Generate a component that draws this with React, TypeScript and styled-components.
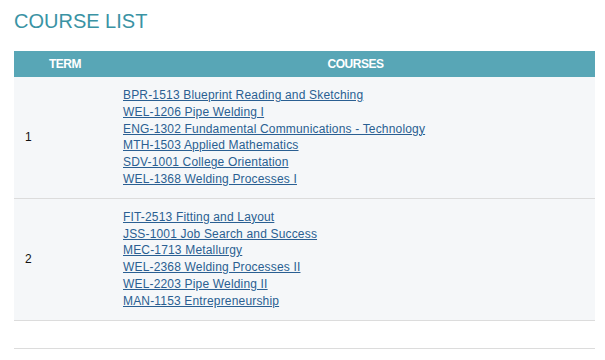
import * as React from 'react';
import styled, { createGlobalStyle } from 'styled-components';

const GlobalStyle = createGlobalStyle`
    body {
        margin: 0;
        background: #ffffff;
        font-family: "Liberation Sans", Arial, sans-serif;
    }
`;

const Page = styled.div`
    padding: 10px 10px 0 14px;
`;

const Title = styled.h1`
    margin: 0 0 18px 0;
    font-size: 20px;
    line-height: 23px;
    font-weight: normal;
    color: #3a93a4;
`;

const Table = styled.table`
    width: 581px;
    border-collapse: collapse;
    font-size: 12px;
`;

const HeadCell = styled.th<{ $width?: number }>`
    background: #58a6b6;
    color: #ffffff;
    font-size: 12px;
    letter-spacing: -0.5px;
    font-weight: bold;
    height: 26px;
    padding: 0;
    text-align: center;
    width: ${p => (p.$width ? `${p.$width}px` : 'auto')};
`;

const Row = styled.tr<{ $empty?: boolean }>`
    background: ${p => (p.$empty ? '#ffffff' : '#f5f7f9')};
    border-bottom: 1px solid #dcdcdc;
    height: ${p => (p.$empty ? '28px' : 'auto')};
`;

const TermCell = styled.td`
    padding: 0 0 0 11px;
    color: #111111;
    vertical-align: middle;
`;

const CoursesCell = styled.td`
    padding: 10px 0 10px 7px;
`;

const CourseList = styled.ul`
    list-style: none;
    margin: 0;
    padding: 0;
    line-height: 16.8px;
    letter-spacing: 0.17px;
`;

const CourseLink = styled.a`
    color: #2a5f92;
    text-decoration: underline;
`;

const terms = [
    {
        term: '1',
        courses: [
            'BPR-1513 Blueprint Reading and Sketching',
            'WEL-1206 Pipe Welding I',
            'ENG-1302 Fundamental Communications - Technology',
            'MTH-1503 Applied Mathematics',
            'SDV-1001 College Orientation',
            'WEL-1368 Welding Processes I',
        ],
    },
    {
        term: '2',
        courses: [
            'FIT-2513 Fitting and Layout',
            'JSS-1001 Job Search and Success',
            'MEC-1713 Metallurgy',
            'WEL-2368 Welding Processes II',
            'WEL-2203 Pipe Welding II',
            'MAN-1153 Entrepreneurship',
        ],
    },
];

export default function App() {
    return (
        <Page>
            <GlobalStyle />
            <Title>COURSE LIST</Title>
            <Table>
                <thead>
                    <tr>
                        <HeadCell $width={102}>TERM</HeadCell>
                        <HeadCell>COURSES</HeadCell>
                    </tr>
                </thead>
                <tbody>
                    {terms.map(t => (
                        <Row key={t.term}>
                            <TermCell>{t.term}</TermCell>
                            <CoursesCell>
                                <CourseList>
                                    {t.courses.map(c => (
                                        <li key={c}>
                                            <CourseLink href="#">{c}</CourseLink>
                                        </li>
                                    ))}
                                </CourseList>
                            </CoursesCell>
                        </Row>
                    ))}
                    <Row $empty>
                        <TermCell />
                        <CoursesCell />
                    </Row>
                </tbody>
            </Table>
        </Page>
    );
}
